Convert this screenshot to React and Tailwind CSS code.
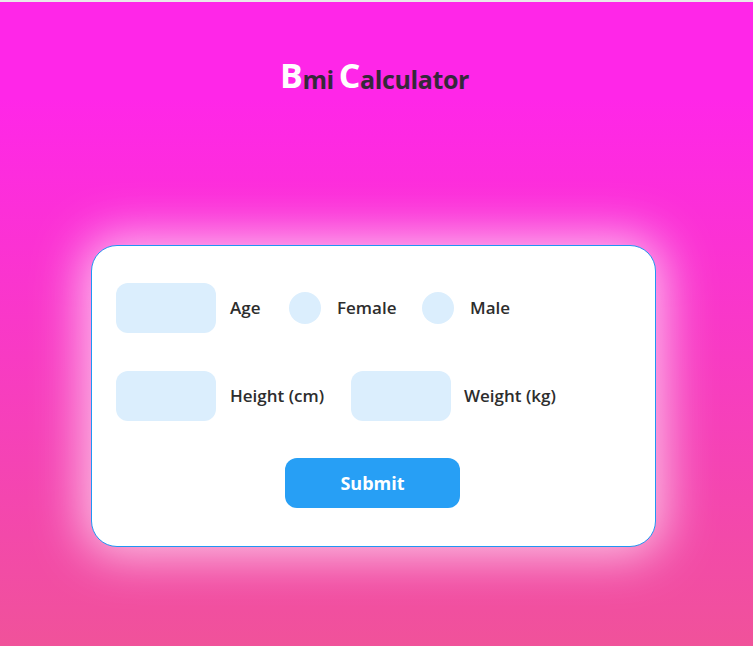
export default function App() {
  const font = { fontFamily: '"Open Sans", "Noto Sans", sans-serif' };
  return (
    <div
      className="w-[753px] h-[646px] flex flex-col border-t-2 border-[#e9e9e9] bg-[linear-gradient(to_bottom,#ff26e8_0%,#ff26e8_15%,#f0529a_100%)]"
      style={font}
    >
      <h1 className="mt-[50px] h-[40px] self-start ml-[280px] flex items-end font-bold text-[#35283a] text-[25px] leading-none tracking-[-0.4px]">
        <span className="text-white text-[34px] leading-none">B</span>
        <span className="mr-[5px]">mi</span>
        <span className="text-white text-[34px] leading-none">C</span>
        <span>alculator</span>
      </h1>
      <div className="mt-[153px] ml-[91px] w-[565px] h-[302px] bg-white rounded-[26px] border border-[#2196f3] shadow-[0_0_50px_8px_rgba(255,255,255,0.7)] pl-[24px] pt-[37px] flex flex-col">
        <div className="flex items-center h-[50px]">
          <div className="w-[100px] h-[50px] rounded-[12px] bg-[#dbeefd]" />
          <span className="ml-[14px] w-[59px] text-[17px] font-semibold text-[#2d2d2d]">Age</span>
          <div className="w-[32px] h-[32px] rounded-full bg-[#dbeefd]" />
          <span className="ml-[16px] w-[85px] text-[17px] font-semibold text-[#2d2d2d]">Female</span>
          <div className="w-[32px] h-[32px] rounded-full bg-[#dbeefd]" />
          <span className="ml-[16px] text-[17px] font-semibold text-[#2d2d2d]">Male</span>
        </div>
        <div className="flex items-center h-[50px] mt-[38px]">
          <div className="w-[100px] h-[50px] rounded-[12px] bg-[#dbeefd]" />
          <span className="ml-[14px] w-[121px] text-[17px] font-semibold text-[#2d2d2d]">Height (cm)</span>
          <div className="w-[100px] h-[50px] rounded-[12px] bg-[#dbeefd]" />
          <span className="ml-[13px] text-[17px] font-semibold text-[#2d2d2d]">Weight (kg)</span>
        </div>
        <div className="mt-[37px] flex pl-[169px]">
          <button className="w-[175px] h-[50px] rounded-[12px] bg-[#279ff5] text-white text-[18px] font-bold">
            Submit
          </button>
        </div>
      </div>
    </div>
  );
}
